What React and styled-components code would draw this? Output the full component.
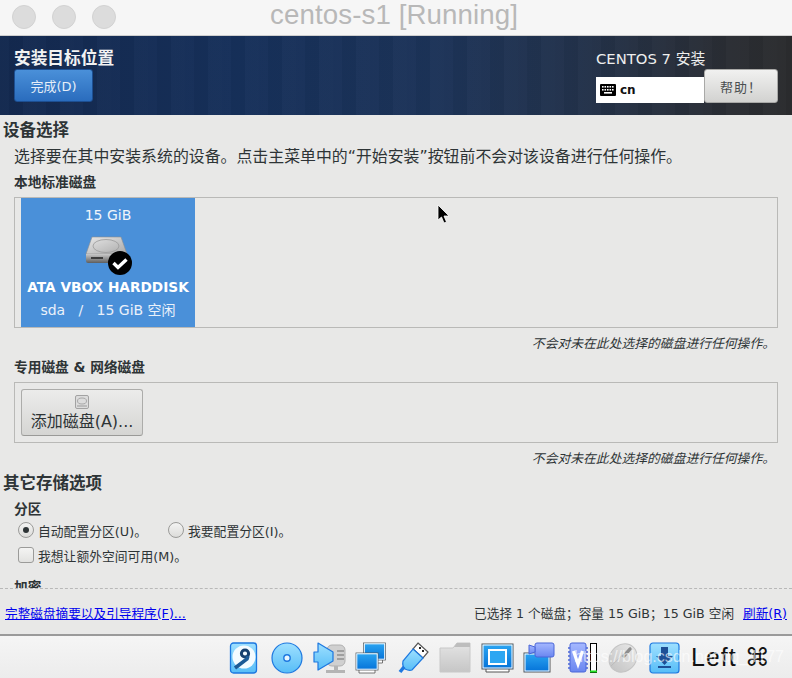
import React from 'react';
import styled, { createGlobalStyle } from 'styled-components';

const Global = createGlobalStyle`
  html, body { margin: 0; padding: 0; background: #e8e8e7; }
  * { box-sizing: border-box; }
`;

const FONT = `"DejaVu Sans", "Noto Sans CJK SC", sans-serif`;

const Window = styled.div`
  position: relative;
  width: 792px;
  height: 678px;
  overflow: hidden;
  display: flex;
  flex-direction: column;
  font-family: ${FONT};
  color: #2e3436;
  background: #e8e8e7;
`;

const TitleBar = styled.div`
  height: 36px;
  flex: none;
  display: flex;
  align-items: center;
  gap: 16px;
  padding: 0 0 1px 12px;
  background: #f6f6f6;
  border-bottom: 1px solid #cfcfcf;
  position: relative;
`;

const Light = styled.span`
  width: 24px;
  height: 24px;
  border-radius: 50%;
  background: #dcdcdc;
  border: 1px solid #d2d2d2;
`;

const WindowTitle = styled.div`
  position: absolute;
  left: 270px;
  top: 0;
  line-height: 30px;
  font-family: "Liberation Sans", sans-serif;
  font-size: 27.7px;
  letter-spacing: 0.1px;
  color: #b8b8b8;
  white-space: nowrap;
`;

const Header = styled.header`
  height: 79px;
  flex: none;
  display: flex;
  justify-content: space-between;
  padding: 12px 14px 0 14px;
  background:
    repeating-linear-gradient(90deg, rgba(255,255,255,0.012) 0 9px, rgba(0,0,0,0.025) 9px 23px, rgba(255,255,255,0.015) 23px 37px),
    linear-gradient(90deg, #13294f 0%, #16305a 30%, #1c3358 55%, #22324c 72%, #2a2d33 92%, #2b2c2e 100%);
`;

const HeaderLeft = styled.div`
  display: flex;
  flex-direction: column;
  align-items: flex-start;
`;

const SpokeTitle = styled.div`
  font-size: 16.7px;
  line-height: 21px;
  font-weight: 700;
  color: #f2f2f2;
`;

const DoneButton = styled.button`
  width: 79px;
  height: 33px;
  padding: 0;
  border: 1px solid #1d4f92;
  border-radius: 3px;
  background: linear-gradient(#4a90d9, #2a6cbd);
  color: #e6eef8;
  font-family: ${FONT};
  font-size: 13px;
`;

const HeaderRight = styled.div`
  width: 182px;
  display: flex;
  flex-direction: column;
  padding-top: 1px;
`;

const Product = styled.div`
  font-size: 14.8px;
  line-height: 20px;
  color: #eeeeee;
`;

const KeyRow = styled.div`
  display: flex;
  align-items: flex-start;
  height: 36px;
`;

const KeyField = styled.div`
  width: 108px;
  height: 26px;
  margin-top: 8px;
  display: flex;
  align-items: center;
  gap: 4px;
  padding-left: 4px;
  background: #ffffff;
  font-size: 12px;
  font-weight: 700;
  color: #111;
`;

const HelpButton = styled.button`
  width: 74px;
  height: 34px;
  padding: 0;
  border: 1px solid #a9a9a7;
  border-radius: 3px;
  background: linear-gradient(#f1f1f0, #d2d2d0);
  color: #4a4e50;
  font-family: ${FONT};
  font-size: 13px;
  letter-spacing: 1px;
`;

const Scroll = styled.main`
  height: 474px;
  flex: none;
  overflow: hidden;
  border-bottom: 1px dashed #b8b8b8;
  padding: 6px 14px 0 14px;
`;

const SectionTitle = styled.h2`
  margin: 0 0 0 -11px;
  font-size: 16.5px;
  line-height: 20px;
  font-weight: 700;
  color: #2e3436;
`;

const Description = styled.p`
  margin: 6px 0 0;
  font-size: 15.9px;
  line-height: 20px;
  white-space: nowrap;
`;

const Label = styled.h3`
  margin: ${(p) => p.$top}px 0 0;
  font-size: 13.7px;
  line-height: 18px;
  font-weight: 700;
  color: #2e3436;
`;

const DiskPanel = styled.div`
  width: 764px;
  height: 131px;
  margin-top: 6px;
  padding: 0 0 0 6px;
  border: 1px solid #b9b9b7;
`;

const DiskTile = styled.div`
  width: 174px;
  height: 129px;
  display: flex;
  flex-direction: column;
  align-items: center;
  padding-top: 7px;
  background: #4a90d9;
  color: #f0f5fb;
  font-size: 14px;
`;

const TileSize = styled.div`
  line-height: 20px;
`;

const TileIcon = styled.div`
  width: 50px;
  height: 42px;
  margin-top: 9px;
`;

const TileName = styled.div`
  margin-top: 1px;
  font-size: 13.7px;
  line-height: 20px;
  font-weight: 700;
  white-space: nowrap;
  color: #ffffff;
`;

const TileInfo = styled.div`
  margin-top: 3px;
  line-height: 20px;
  white-space: pre;
  color: #eaf1fa;
`;

const Note = styled.div`
  width: 761px;
  margin-top: 7px;
  text-align: right;
  font-size: 12.8px;
  line-height: 17px;
  font-style: italic;
  color: #2e3436;
`;

const NetworkPanel = styled.div`
  width: 764px;
  height: 61px;
  margin-top: 6px;
  padding: 6px;
  border: 1px solid #b9b9b7;
`;

const AddButton = styled.button`
  width: 122px;
  height: 47px;
  display: flex;
  flex-direction: column;
  align-items: center;
  padding: 5px 0 0;
  border: 1px solid #acacaa;
  border-bottom-color: #9a9a98;
  border-radius: 3px;
  background: linear-gradient(#ececeb, #d5d5d3);
  color: #2e3436;
  font-family: ${FONT};
  font-size: 16px;
  line-height: 25px;
`;

const OtherTitle = styled(SectionTitle)`
  margin-top: 7px;
`;

const OptionRow = styled.div`
  display: flex;
  align-items: center;
  height: 20px;
  margin: ${(p) => p.$top}px 0 0 4px;
`;

const Option = styled.label`
  display: flex;
  align-items: center;
  gap: 4px;
  width: ${(p) => p.$width}px;
  font-size: 12.8px;
  white-space: nowrap;
`;

const Radio = styled.span`
  width: 16px;
  height: 16px;
  flex: none;
  display: flex;
  align-items: center;
  justify-content: center;
  border-radius: 50%;
  border: 1px solid #9b9b99;
  background: linear-gradient(#f4f4f3, #dcdcda);
  &::after {
    content: '';
    width: 6px;
    height: 6px;
    border-radius: 50%;
    background: ${(p) => (p.$on ? '#2e3436' : 'transparent')};
  }
`;

const Check = styled.span`
  width: 16px;
  height: 16px;
  flex: none;
  border-radius: 3px;
  border: 1px solid #9b9b99;
  background: linear-gradient(#f4f4f3, #e2e2e0);
`;

const Footer = styled.div`
  height: 47px;
  flex: none;
  display: flex;
  justify-content: space-between;
  align-items: flex-start;
  padding: 15px 5px 0 5px;
  font-size: 12.65px;
  line-height: 20px;
  border-bottom: 2px solid #9a9a9a;
`;

const FooterLink = styled.a`
  color: #0000ee;
  text-decoration: underline;
`;

const FooterRight = styled.div`
  display: flex;
  gap: 9px;
  white-space: pre;
`;

const StatusBar = styled.div`
  flex: 1;
  display: flex;
  align-items: center;
  padding: 1px 0 0 229px;
  background: linear-gradient(#f5f5f5, #ececec);
`;

const StatusIcon = styled.svg`
  width: ${(p) => p.$w}px;
  height: 32px;
  margin-left: ${(p) => p.$gap || 0}px;
  flex: none;
`;

const HostKey = styled.span`
  margin-left: 11px;
  font-family: "Liberation Sans", "DejaVu Sans", sans-serif;
  font-size: 25px;
  letter-spacing: 1px;
  color: #111;
  white-space: nowrap;
`;

const Watermark = styled.div`
  position: absolute;
  left: 574px;
  top: 648px;
  font-family: "Liberation Sans", sans-serif;
  font-size: 16px;
  color: rgba(255, 255, 255, 0.62);
  white-space: nowrap;
`;

const Cursor = styled.svg`
  position: absolute;
  left: 437px;
  top: 204px;
  width: 13px;
  height: 20px;
`;

const KeyboardIcon = () => (
  <svg width="16" height="12" viewBox="0 0 16 12">
    <rect width="16" height="12" rx="1" fill="#000" />
    {[2, 4.5, 7, 9.5, 12].map((x) => (
      <rect key={x} x={x} y="2" width="1.6" height="1.6" fill="#fff" />
    ))}
    {[2, 4.5, 7, 9.5, 12].map((x) => (
      <rect key={x} x={x} y="5" width="1.6" height="1.6" fill="#fff" />
    ))}
    <rect x="4" y="8" width="8" height="1.6" fill="#fff" />
  </svg>
);

const DiskIcon = () => (
  <svg width="50" height="42" viewBox="0 0 50 42">
    <defs>
      <linearGradient id="diskTop" x1="0" y1="0" x2="1" y2="1">
        <stop offset="0" stopColor="#e8e8e8" />
        <stop offset="1" stopColor="#a9a9a9" />
      </linearGradient>
      <linearGradient id="diskFront" x1="0" y1="0" x2="0" y2="1">
        <stop offset="0" stopColor="#c9c9c9" />
        <stop offset="1" stopColor="#5e5e5e" />
      </linearGradient>
    </defs>
    <path d="M9 3 H38 L44 20 H3 Z" fill="url(#diskTop)" stroke="#8d8d8d" strokeWidth="0.6" />
    <ellipse cx="23" cy="12" rx="13" ry="6.5" fill="none" stroke="#999" strokeWidth="0.8" />
    <path d="M3 20 H44 V27 Q44 29 42 29 H5 Q3 29 3 27 Z" fill="url(#diskFront)" />
    <rect x="8" y="23" width="12" height="2" fill="#3d3d3d" />
    <circle cx="37" cy="29" r="12" fill="#000" />
    <path d="M30.5 29 L35 33.5 L43.5 25.5" fill="none" stroke="#fff" strokeWidth="3.4" />
  </svg>
);

const TinyDisk = () => (
  <svg width="14" height="14" viewBox="0 0 14 14" style={{ flex: 'none' }}>
    <rect x="0.5" y="0.5" width="13" height="13" rx="1.5" fill="#dcdcdc" stroke="#a2a2a2" />
    <ellipse cx="7" cy="6" rx="4.5" ry="3" fill="none" stroke="#a8a8a8" />
    <rect x="2" y="10" width="10" height="2" fill="#bbb" />
  </svg>
);

const Defs = () => (
  <svg width="0" height="0" style={{ position: 'absolute' }}>
    <defs>
      <linearGradient id="vbLight" x1="0" y1="0" x2="0" y2="1">
        <stop offset="0" stopColor="#9fe0ff" />
        <stop offset="1" stopColor="#57bdf7" />
      </linearGradient>
      <linearGradient id="vbScreen" x1="0" y1="0" x2="0" y2="1">
        <stop offset="0" stopColor="#2ca6f2" />
        <stop offset="1" stopColor="#0472d8" />
      </linearGradient>
      <linearGradient id="vbGrey" x1="0" y1="0" x2="0" y2="1">
        <stop offset="0" stopColor="#e4e4e4" />
        <stop offset="1" stopColor="#c6c6c6" />
      </linearGradient>
      <linearGradient id="vbPurple" x1="0" y1="0" x2="0" y2="1">
        <stop offset="0" stopColor="#a5b8ff" />
        <stop offset="1" stopColor="#6a86f0" />
      </linearGradient>
    </defs>
  </svg>
);

const Monitor = ({ x, y, w, h }) => (
  <g>
    <path d={`M${x + 3} ${y + h} V${y + h + 3} H${x + w - 3} V${y + h}`} fill="#fff" stroke="#555" strokeWidth="0.8" />
    <rect x={x} y={y} width={w} height={h} fill="url(#vbScreen)" stroke="#555" strokeWidth="0.8" />
    <rect x={x + 0.8} y={y + 0.8} width={w - 1.6} height={h - 1.6} fill="none" stroke="#fff" strokeWidth="1" />
  </g>
);

export default function App() {
  return (
    <Window>
      <Global />
      <Defs />
      <TitleBar>
        <Light />
        <Light />
        <Light />
        <WindowTitle>centos-s1 [Running]</WindowTitle>
      </TitleBar>

      <Header>
        <HeaderLeft>
          <SpokeTitle>安装目标位置</SpokeTitle>
          <DoneButton>完成(D)</DoneButton>
        </HeaderLeft>
        <HeaderRight>
          <Product>CENTOS 7 安装</Product>
          <KeyRow>
            <KeyField>
              <KeyboardIcon />
              cn
            </KeyField>
            <HelpButton>帮助！</HelpButton>
          </KeyRow>
        </HeaderRight>
      </Header>

      <Scroll>
        <SectionTitle>设备选择</SectionTitle>
        <Description>选择要在其中安装系统的设备。点击主菜单中的“开始安装”按钮前不会对该设备进行任何操作。</Description>
        <Label $top={6}>本地标准磁盘</Label>
        <DiskPanel>
          <DiskTile>
            <TileSize>15 GiB</TileSize>
            <TileIcon>
              <DiskIcon />
            </TileIcon>
            <TileName>ATA VBOX HARDDISK</TileName>
            <TileInfo>sda   /   15 GiB 空闲</TileInfo>
          </DiskTile>
        </DiskPanel>
        <Note>不会对未在此处选择的磁盘进行任何操作。</Note>
        <Label $top={6}>专用磁盘 &amp; 网络磁盘</Label>
        <NetworkPanel>
          <AddButton>
            <TinyDisk />
            添加磁盘(A)...
          </AddButton>
        </NetworkPanel>
        <Note>不会对未在此处选择的磁盘进行任何操作。</Note>
        <OtherTitle>其它存储选项</OtherTitle>
        <Label $top={6}>分区</Label>
        <OptionRow $top={2}>
          <Option $width={150}>
            <Radio $on />
            自动配置分区(U)。
          </Option>
          <Option $width={150}>
            <Radio />
            我要配置分区(I)。
          </Option>
        </OptionRow>
        <OptionRow $top={5}>
          <Option $width={200}>
            <Check />
            我想让额外空间可用(M)。
          </Option>
        </OptionRow>
        <Label $top={13}>加密</Label>
      </Scroll>

      <Footer>
        <FooterLink>完整磁盘摘要以及引导程序(F)...</FooterLink>
        <FooterRight>
          <span>已选择 1 个磁盘；容量 15 GiB；15 GiB 空闲</span>
          <FooterLink>刷新(R)</FooterLink>
        </FooterRight>
      </Footer>

      <StatusBar>
        {/* hard disk */}
        <StatusIcon $w={29} viewBox="0 0 29 32">
          <rect x="1.5" y="1" width="26" height="30" rx="3" fill="url(#vbLight)" stroke="#1d78e0" strokeWidth="1.3" />
          <circle cx="15" cy="15" r="11.5" fill="#f4fbff" />
          <circle cx="16" cy="11.5" r="3.6" fill="#f4fbff" stroke="#16406f" strokeWidth="3" />
          <path d="M19 14 L18 17 L6 26" fill="none" stroke="#1c5a96" strokeWidth="3.6" />
        </StatusIcon>
        {/* optical disc */}
        <StatusIcon $gap={13} $w={32} viewBox="0 0 32 32">
          <circle cx="16" cy="16" r="15" fill="url(#vbLight)" stroke="#1d78e0" strokeWidth="1.2" />
          <circle cx="16" cy="16" r="3.2" fill="#e8f6ff" stroke="#1d78e0" strokeWidth="1.4" />
        </StatusIcon>
        {/* audio */}
        <StatusIcon $gap={10} $w={33} viewBox="0 0 33 32">
          <rect x="14" y="3" width="18" height="21" rx="5" fill="#d0d0d0" stroke="#b0b0b0" />
          <path d="M24 9 H31 M24 13 H31 M24 17 H31" stroke="#8e8e8e" strokeWidth="1.4" />
          <rect x="13" y="28" width="19" height="3" fill="#b4b4b4" />
          <rect x="21" y="24" width="4" height="4" fill="#b4b4b4" />
          <path d="M1 10 H5 V1 L20 10 V19 L5 28 V20 H1 Z" fill="url(#vbLight)" stroke="#1d78e0" strokeWidth="1.2" strokeLinejoin="round" />
        </StatusIcon>
        {/* network */}
        <StatusIcon $gap={9} $w={32} viewBox="0 0 32 32">
          <Monitor x={8.5} y={1} w={22} h={17} />
          <Monitor x={1} y={11} w={22} h={17} />
        </StatusIcon>
        {/* usb */}
        <StatusIcon $gap={10} $w={32} viewBox="0 0 32 32">
          <path d="M21 1 L31 10 L26 16 L16 7 Z" fill="#fff" stroke="#555" strokeWidth="1.2" />
          <rect x="22" y="5" width="2" height="2" fill="#222" />
          <rect x="25" y="8" width="2" height="2" fill="#222" />
          <path d="M16 7 L26 16 L15 28 Q12 29 8 27 Q5 24 6 19 Z" fill="url(#vbLight)" stroke="#1d78e0" strokeWidth="1.2" />
          <path d="M7 25 L3 30" stroke="#1d78e0" strokeWidth="3.5" />
        </StatusIcon>
        {/* shared folder */}
        <StatusIcon $gap={10} $w={32} viewBox="0 0 32 32">
          <path d="M1 6 H14 L18 1 H31 V30 H1 Z" fill="url(#vbGrey)" stroke="#c8c8c8" />
          <path d="M18 1 H31 V5 H15 Z" fill="#bdbdbd" />
        </StatusIcon>
        {/* display */}
        <StatusIcon $gap={10} $w={33} viewBox="0 0 33 32">
          <path d="M5 27 V30 H28 V27" fill="#fff" stroke="#555" />
          <rect x="1" y="2" width="31" height="25" fill="url(#vbScreen)" stroke="#555" />
          <rect x="2" y="3" width="29" height="23" fill="none" stroke="#fff" />
          <rect x="8" y="8" width="17" height="14" fill="#2ca6f2" stroke="#fff" strokeWidth="2" />
        </StatusIcon>
        {/* video capture */}
        <StatusIcon $gap={9} $w={32} viewBox="0 0 32 32">
          <rect x="1" y="11" width="26" height="19" fill="url(#vbScreen)" stroke="#555" />
          <rect x="2" y="12" width="24" height="17" fill="none" stroke="#fff" />
          <rect x="12" y="1" width="19" height="14" rx="2" fill="url(#vbPurple)" stroke="#4a66d8" />
          <path d="M12 5 L6 3 V12 L12 10 Z" fill="url(#vbPurple)" stroke="#4a66d8" />
        </StatusIcon>
        {/* cpu with activity bar */}
        <StatusIcon $gap={12} $w={31} viewBox="0 0 31 32">
          <path d="M1 6 H3 M1 10 H3 M1 14 H3 M1 18 H3 M1 22 H3 M1 26 H3 M19 6 H21 M19 10 H21 M19 14 H21 M19 18 H21 M19 22 H21 M19 26 H21" stroke="#4a66d8" strokeWidth="1.4" />
          <rect x="3" y="1" width="16" height="29" rx="2" fill="url(#vbPurple)" stroke="#4a66d8" />
          <path d="M6.5 9 L11 22 L15.5 9" fill="none" stroke="#fff" strokeWidth="3.2" />
          <rect x="23.5" y="1.5" width="6" height="29" fill="#fff" stroke="#000" strokeWidth="1" />
          <rect x="23" y="28.5" width="7" height="2" fill="#22dd22" />
        </StatusIcon>
        {/* mouse */}
        <StatusIcon $gap={9} $w={32} viewBox="0 0 32 32">
          <ellipse cx="16" cy="16" rx="13" ry="15" transform="rotate(42 16 16)" fill="url(#vbGrey)" stroke="#c4c4c4" />
          <path d="M4 24 L24 5" stroke="#bcbcbc" />
          <path d="M17 14 L23 7" stroke="#8e8e8e" strokeWidth="3.4" strokeLinecap="round" />
        </StatusIcon>
        {/* capture arrow */}
        <StatusIcon $gap={10} $w={31} viewBox="0 0 31 32">
          <rect x="1" y="1" width="29" height="30" rx="3" fill="url(#vbLight)" stroke="#1d78e0" strokeWidth="1.2" />
          <path d="M12 5 H19 V14 H24 L15.5 23 L7 14 H12 Z" fill="#1d4f96" />
          <rect x="9" y="24" width="13" height="2" fill="#1d4f96" />
        </StatusIcon>
        <HostKey>Left ⌘</HostKey>
      </StatusBar>

      <Watermark>https://blog.csdn.net/qq_4177</Watermark>

      <Cursor viewBox="0 0 13 20">
        <path d="M1 1 V16 L4.5 13 L7 19 L9.5 18 L7 12 H12 Z" fill="#000" stroke="#fff" strokeWidth="0.8" />
      </Cursor>
    </Window>
  );
}
